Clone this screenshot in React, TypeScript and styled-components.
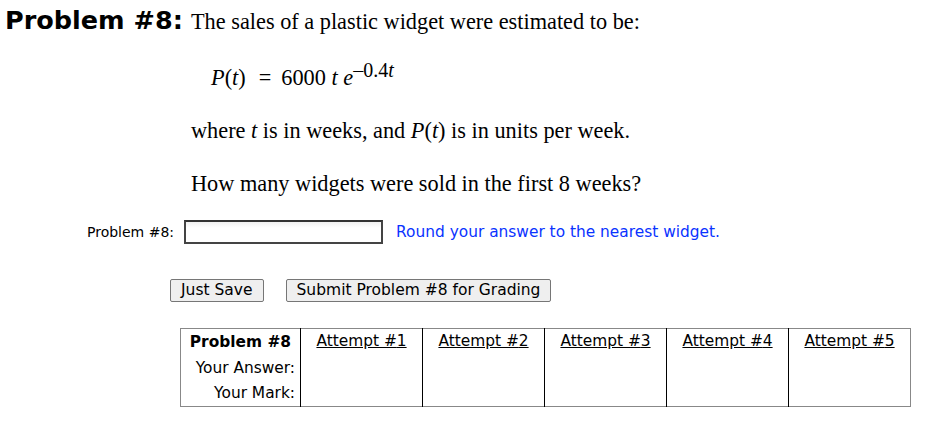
import React from "react";
import styled, { createGlobalStyle } from "styled-components";

const Global = createGlobalStyle`
  html, body { margin: 0; padding: 0; background: #fff; }
  body { font-family: "DejaVu Sans", Verdana, sans-serif; color: #000; }
`;

const Page = styled.div`
  padding: 5px 0 0 5px;
  display: flex;
  flex-direction: column;
`;

const HeadRow = styled.div`
  display: flex;
  align-items: baseline;
`;

const Heading = styled.span`
  font-family: "DejaVu Sans", Verdana, sans-serif;
  font-weight: bold;
  font-size: 25.5px;
  width: 186px;
  flex: none;
  white-space: nowrap;
`;

const Serif = styled.p<{ $indent?: number; $top?: number }>`
  margin: ${(p) => p.$top ?? 0}px 0 0 ${(p) => p.$indent ?? 0}px;
  font-family: "Liberation Serif", "Times New Roman", serif;
  font-size: 22.3px;
  line-height: 24px;
  white-space: nowrap;
`;

const Body = styled.div`
  padding-left: 186px;
  display: flex;
  flex-direction: column;
`;

const Eq = styled.span`
  margin: 0 10px 0 13px;
`;

const Sup = styled.sup`
  font-size: 20px;
  vertical-align: 8px;
  line-height: 0;
  margin-left: 0;
`;

const AnswerRow = styled.div`
  display: flex;
  align-items: center;
  margin-top: 24px;
  padding-left: 82px;
  font-size: 14px;
`;

const Label = styled.span`
  margin-right: 12px;
`;

const Input = styled.input`
  width: 199px;
  height: 24px;
  box-sizing: border-box;
  border: 2px solid #444;
  border-top-color: #333;
  background: linear-gradient(#f0f0f0, #fff 6px);
  margin: 0 13px 0 -2px;
  padding: 0;
`;

const Hint = styled.span`
  color: #0a33ff;
  font-size: 15.4px;
`;

const ButtonRow = styled.div`
  display: flex;
  gap: 22px;
  margin-top: 35px;
  padding-left: 165px;
`;

const Button = styled.button`
  font-family: "DejaVu Sans", Verdana, sans-serif;
  font-size: 15.5px;
  color: #000;
  background: #efefef;
  border: 1px solid #767676;
  border-radius: 2px;
  height: 23px;
  padding: 0 10px;
  line-height: 21px;
`;

const Table = styled.table`
  margin: 26px 0 0 175px;
  border-collapse: collapse;
  border: 1px solid #888;
  font-size: 15.4px;
  table-layout: fixed;
  width: 731px;
`;

const HeadCol = styled.col`
  width: 120px;
`;

const AttemptCol = styled.col`
  width: 122px;
`;

const Cell = styled.td<{ $bold?: boolean; $pad: number }>`
  padding: 0 ${(p) => p.$pad}px 0 0;
  height: 26px;
  text-align: right;
  font-weight: ${(p) => (p.$bold ? "bold" : "normal")};
  white-space: nowrap;
  box-sizing: border-box;
`;

const Attempt = styled.td`
  padding: 3px 0 0;
  text-align: center;
  vertical-align: top;
  border-left: 1px solid #000;
  white-space: nowrap;
`;

const Link = styled.span`
  text-decoration: underline;
`;

const I = styled.i``;

export default function App() {
  const attempts = [1, 2, 3, 4, 5];
  return (
    <>
      <Global />
      <Page>
        <HeadRow>
          <Heading>Problem #8:</Heading>
          <Serif>The sales of a plastic widget were estimated to be:</Serif>
        </HeadRow>
        <Body>
          <Serif $indent={20} $top={31}>
            <I>P</I>(<I>t</I>)<Eq>=</Eq>6000 <I>t</I> <I>e</I>
            <Sup>–0.4<I>t</I></Sup>
          </Serif>
          <Serif $top={29}>
            where <I>t</I> is in weeks, and <I>P</I>(<I>t</I>) is in units per week.
          </Serif>
          <Serif $top={29}>How many widgets were sold in the first 8 weeks?</Serif>
        </Body>
        <AnswerRow>
          <Label>Problem #8:</Label>
          <Input type="text" />
          <Hint>Round your answer to the nearest widget.</Hint>
        </AnswerRow>
        <ButtonRow>
          <Button>Just Save</Button>
          <Button>Submit Problem #8 for Grading</Button>
        </ButtonRow>
        <Table>
          <colgroup>
            <HeadCol />
            {attempts.map((a) => (
              <AttemptCol key={a} />
            ))}
          </colgroup>
          <tbody>
            <tr>
              <Cell $bold $pad={9}>Problem #8</Cell>
              {attempts.map((a) => (
                <Attempt key={a} rowSpan={3}>
                  <Link>Attempt #{a}</Link>
                </Attempt>
              ))}
            </tr>
            <tr>
              <Cell $pad={5}>Your Answer:</Cell>
            </tr>
            <tr>
              <Cell $pad={5}>Your Mark:</Cell>
            </tr>
          </tbody>
        </Table>
      </Page>
    </>
  );
}
